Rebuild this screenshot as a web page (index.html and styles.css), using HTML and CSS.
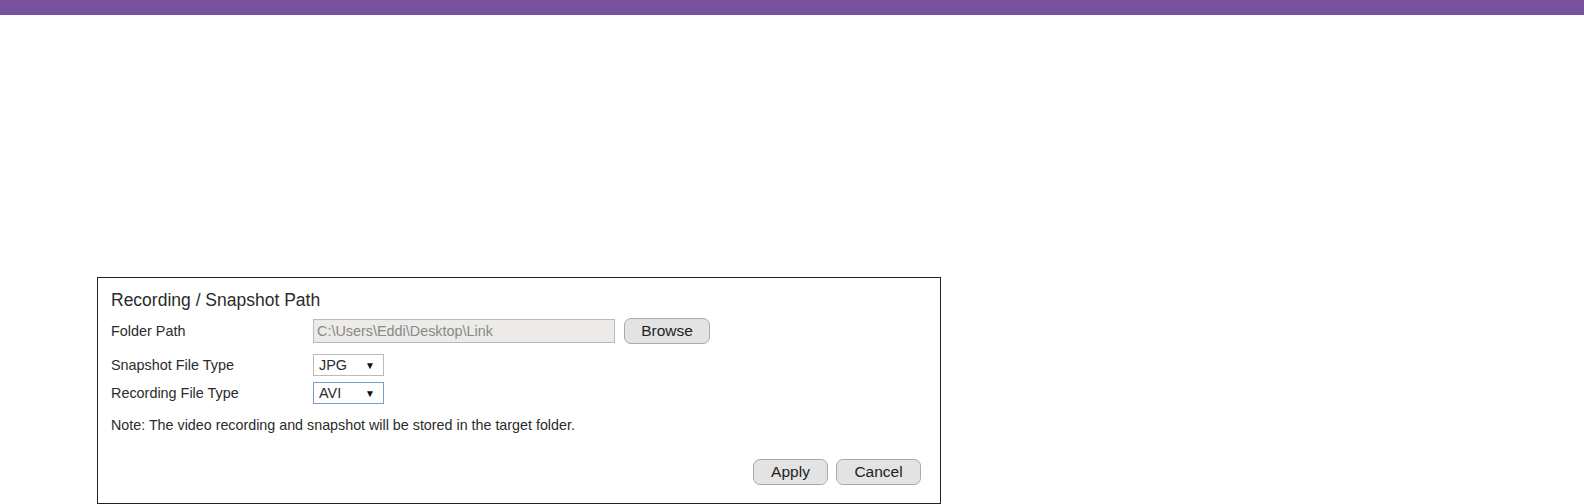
FILE: index.html
```html
<!DOCTYPE html>
<html lang="en">
<head>
  <meta charset="UTF-8">
  <title>Recording / Snapshot Path</title>
  <link rel="stylesheet" href="styles.css">
</head>
<body>
  <div class="top-bar"></div>

  <div class="panel">
    <div class="panel-title">Recording / Snapshot Path</div>

    <div class="row folder-row">
      <div class="label">Folder Path</div>
      <input class="path-input" type="text" value="C:\Users\Eddi\Desktop\Link" disabled>
      <button class="btn browse">Browse</button>
    </div>

    <div class="row">
      <div class="label">Snapshot File Type</div>
      <div class="select">JPG <span class="arrow">&#9660;</span></div>
    </div>

    <div class="row">
      <div class="label">Recording File Type</div>
      <div class="select focused">AVI <span class="arrow">&#9660;</span></div>
    </div>

    <div class="note">Note: The video recording and snapshot will be stored in the target folder.</div>

    <div class="actions">
      <button class="btn">Apply</button>
      <button class="btn">Cancel</button>
    </div>
  </div>
</body>
</html>
```

FILE: styles.css
```css
body {
  margin: 0;
  background-color: #fff;
  font-family: "Liberation Sans", Arial, sans-serif;
  font-size: 14px;
  color: #2b2b2b;
}

.top-bar {
  height: 15px;
  background-color: #77519e;
}

.panel {
  margin: 262px 0 0 97px;
  width: 844px;
  height: 227px;
  box-sizing: border-box;
  border: 1px solid #222;
  padding: 12px 12px 0 13px;
}

.panel-title {
  font-size: 17.5px;
  line-height: 20px;
  margin-bottom: 7px;
}

.row {
  display: flex;
  align-items: center;
  height: 28px;
}

.folder-row {
  margin-bottom: 6px;
}

.label {
  width: 202px;
  font-size: 14.4px;
}

.path-input {
  width: 302px;
  height: 24px;
  box-sizing: border-box;
  border: 1px solid #bbb;
  background-color: #ecebe8;
  color: #888;
  font-family: inherit;
  font-size: 14.4px;
  padding: 0 3px;
  margin: 0;
}

.btn {
  height: 26px;
  padding: 0;
  border: 1px solid #a9a9a9;
  border-radius: 7px;
  background-color: #e3e3e3;
  font-family: inherit;
  font-size: 15.5px;
  color: #222;
}

.browse {
  margin-left: 9px;
  width: 86px;
}

.select {
  width: 71px;
  height: 22px;
  box-sizing: border-box;
  border: 1px solid #bbb;
  display: flex;
  align-items: center;
  justify-content: space-between;
  padding: 0 8px 0 5px;
  font-size: 14.4px;
}

.select.focused {
  border-color: #7a9cc6;
}

.arrow {
  font-size: 10px;
  color: #111;
}

.note {
  margin-top: 10px;
  font-size: 14.3px;
  line-height: 17px;
}

.actions {
  display: flex;
  justify-content: flex-end;
  gap: 8px;
  margin-top: 25px;
  padding-right: 7px;
}

.actions .btn {
  width: 75px;
}

.actions .btn + .btn {
  width: 85px;
}
```
